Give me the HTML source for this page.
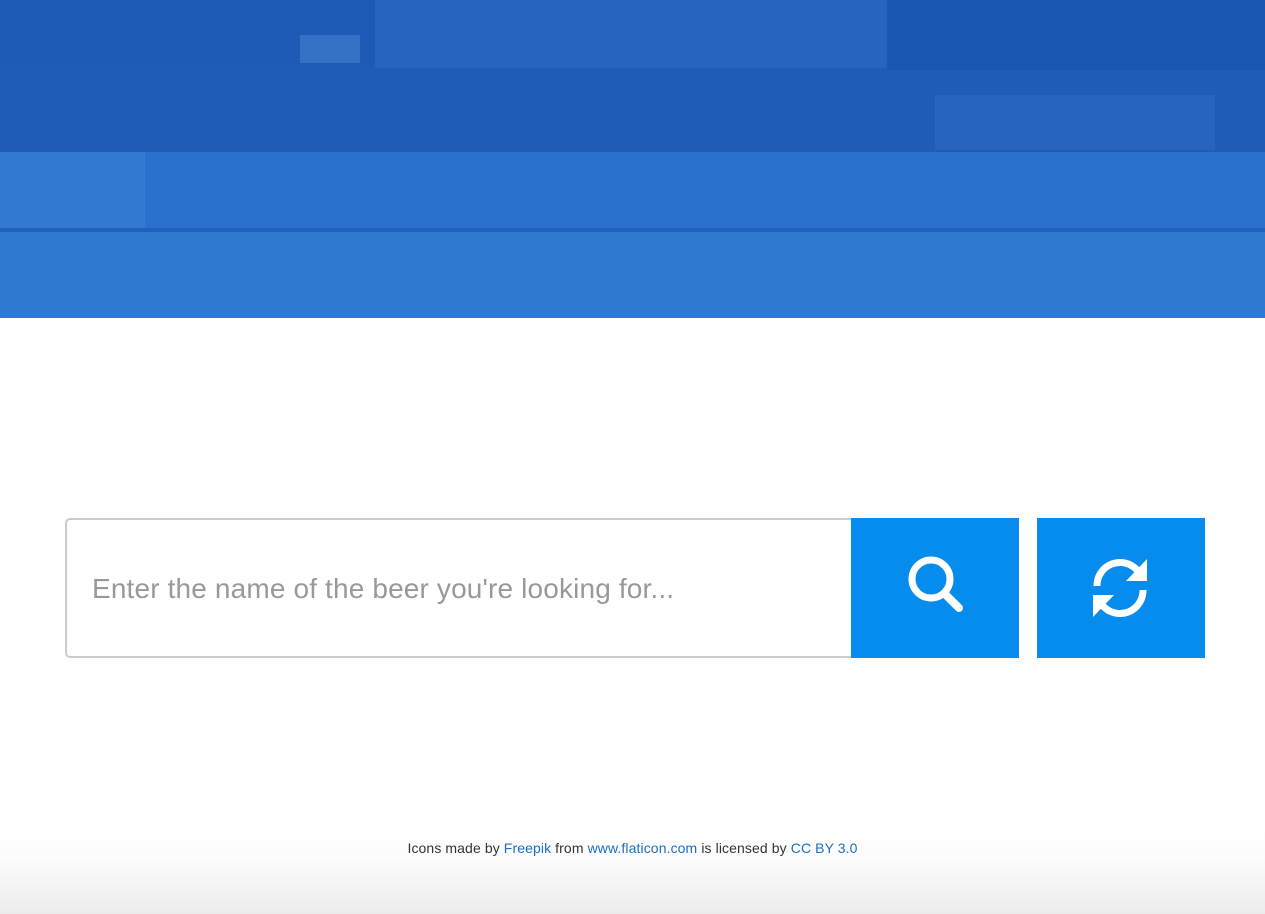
<!DOCTYPE html>
<html><head><style>
body{margin:0;width:1265px;height:914px;position:relative;overflow:hidden;background:#fff;font-family:"Liberation Sans",sans-serif}
.hero{position:absolute;left:0;top:0;width:1265px;height:318px;overflow:hidden}
.hero div{position:absolute}
.inp{position:absolute;left:65px;top:518px;width:786px;height:140px;box-sizing:border-box;border:2px solid #ccc;border-right:none;border-radius:5px 0 0 5px;background:#fff}
.inp span{position:absolute;left:25px;top:53px;font-size:28px;color:#999;letter-spacing:0.15px}
.btn{position:absolute;top:518px;width:168px;height:140px;background:#058ced}
.foot{position:absolute;left:0;top:820px;width:1265px;height:94px;background:linear-gradient(#fff,#fcfcfc 40%,#ececec)}
.foot p{margin:0;position:absolute;top:20px;width:100%;text-align:center;font-size:14px;color:#333;letter-spacing:0.1px}
.foot a{color:#1a6fc1;text-decoration:none}
</style></head><body>
<div class="hero">
<div style="left:0;top:0;width:1265px;height:318px;background:#3079d2"></div>
<div style="left:0;top:0;width:1265px;height:152px;background:#1d5cb8"></div>
<div style="left:0;top:0;width:375px;height:65px;background:#1c5ab6"></div>
<div style="left:375px;top:0;width:512px;height:68px;background:#2664c0"></div>
<div style="left:887px;top:0;width:378px;height:70px;background:#1a57b2"></div>
<div style="left:300px;top:35px;width:60px;height:28px;background:#3470c4"></div>
<div style="left:935px;top:95px;width:280px;height:55px;background:#2565c0"></div>
<div style="left:0;top:152px;width:1265px;height:78px;background:#2a71ce"></div>
<div style="left:0;top:152px;width:145px;height:76px;background:#3179d3"></div>
<div style="left:0;top:228px;width:1265px;height:4px;background:#2161bd"></div>
</div>
<div class="inp"><span>Enter the name of the beer you're looking for...</span></div>
<div class="btn" style="left:851px"><svg width="168" height="140" viewBox="0 0 168 140"><circle cx="80" cy="61" r="19" fill="none" stroke="#fff" stroke-width="7"/><line x1="94" y1="76" x2="108" y2="90" stroke="#fff" stroke-width="8" stroke-linecap="round"/></svg></div>
<div class="btn" style="left:1037px"><svg width="168" height="140" viewBox="0 0 168 140"><path d="M60 68 A23 23 0 0 1 100 52" fill="none" stroke="#fff" stroke-width="7"/><polygon points="110,41 110,63 89,63" fill="#fff"/><path d="M106 72 A23 23 0 0 1 66 88" fill="none" stroke="#fff" stroke-width="7"/><polygon points="56,99 56,77 77,77" fill="#fff"/></svg></div>
<div class="foot"><p>Icons made by <a>Freepik</a> from <a>www.flaticon.com</a> is licensed by <a>CC BY 3.0</a></p></div>
</body></html>
